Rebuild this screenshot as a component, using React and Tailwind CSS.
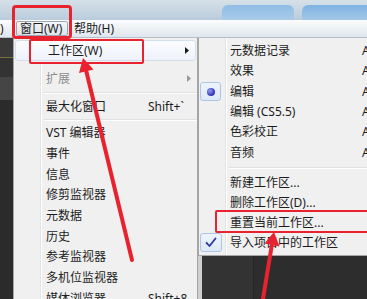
import React from "react";

const Tri = ({ color = "#1a1a1a" }) => (
  <svg width="4" height="7" viewBox="0 0 4 7" className="block">
    <path d="M0 0 L4 3.5 L0 7 Z" fill={color} />
  </svg>
);

function M1Row({ label, shortcut, arrow, disabled, highlight, h = "h-[21px]" }) {
  return (
    <div className={`relative flex items-center ${h} pl-[32px] pr-[5px] ${highlight ? "mx-[1px] rounded-[3px] border border-[#d5dfec] bg-gradient-to-b from-[#fbfcfe] to-[#eef3fa] pl-[31px] pr-[4px]" : ""}`}>
      <span className={`w-[102px] shrink-0 whitespace-nowrap ${disabled ? "text-[#8e8e8e]" : "text-[#1c1c1c]"}`}>{label}</span>
      {shortcut && <span className="text-[#1c1c1c] whitespace-nowrap">{shortcut}</span>}
      {arrow && (
        <span className="ml-auto mr-[1px]">
          <Tri color={disabled ? "#9a9a9a" : "#1a1a1a"} />
        </span>
      )}
    </div>
  );
}

function Sep({ h }) {
  return (
    <div className={`${h} flex items-center pl-[30px]`}>
      <div className="w-full">
        <div className="h-px bg-[#e0e0e0]" />
        <div className="h-px bg-white" />
      </div>
    </div>
  );
}

function M2Row({ label, shortcut, h, mark }) {
  return (
    <div className={`relative flex items-center ${h}`}>
      <div className="w-[31px] shrink-0 h-full flex items-center pl-[1px]">
        {mark === "dot" && (
          <div className="w-[21px] h-[19px] rounded-[3px] border border-[#aec6e4] bg-gradient-to-b from-[#eef4fc] to-[#dde9f7] flex items-center justify-center">
            <div className="w-[8px] h-[8px] rounded-full bg-[radial-gradient(circle_at_35%_35%,#9a9cf0,#3a3cc0_60%,#25278f)]" />
          </div>
        )}
        {mark === "check" && (
          <div className="w-[22px] h-[19px] rounded-[3px] border border-[#aec6e4] bg-gradient-to-b from-[#eef4fc] to-[#dde9f7] flex items-center justify-center">
            <svg width="12" height="11" viewBox="0 0 12 11">
              <path d="M1.5 5.8 L4.5 9 L10.5 1.5" fill="none" stroke="#2b36a8" strokeWidth="1.8" strokeLinecap="round" strokeLinejoin="round" />
            </svg>
          </div>
        )}
      </div>
      <span className="w-[132px] shrink-0 whitespace-nowrap text-[#1c1c1c]">{label}</span>
      {shortcut && <span className="shrink-0 whitespace-nowrap text-[#1c1c1c]">{shortcut}</span>}
    </div>
  );
}

export default function App() {
  const RED = "#e8232f";
  return (
    <div className="relative w-[367px] h-[299px] overflow-hidden bg-[#2c2c2c] text-[12px] leading-none font-['Noto_Sans','Noto_Sans_CJK_SC',sans-serif]">
      {/* title bar */}
      <div className="h-[20px] flex items-end bg-gradient-to-b from-[#d6e0e8] via-[#c8d6e2] to-[#b9ccdc]">
        <div className="w-[222px]" />
        <div className="w-[72px] h-[15px] rounded-t-[6px] bg-gradient-to-b from-[#8ebde6] to-[#a9cbe8]" />
        <div className="w-[8px]" />
        <div className="flex-1 h-[15px] rounded-tl-[6px] bg-gradient-to-b from-[#7fb3e3] to-[#a3c7e8]" />
      </div>
      {/* menu bar */}
      <div className="h-[18px] flex items-center bg-gradient-to-b from-[#fbfcfd] to-[#dfe6ee] border-b border-[#b7c0ca] text-[#1c1c1c]">
        <span className="w-[16px]">)</span>
        <span className="h-[15px] w-[52px] flex items-center pl-[3px] rounded-[2px] border border-[#9da6b1] bg-gradient-to-b from-[#f4f6f8] to-[#dde3ea]">窗口(W)</span>
        <span className="ml-[6px]">帮助(H)</span>
      </div>
      {/* body */}
      <div className="flex h-[261px]">
        {/* left dark strip */}
        <div className="w-[13px] shrink-0 flex flex-col">
          <div className="h-[19px] bg-[#3a3a3a]" />
          <div className="h-px bg-[#7d6f3a]" />
          <div className="h-[19px] bg-[#333]" />
          <div className="h-[23px] bg-[#454545]" />
          <div className="flex-1 bg-[#2b2b2b]" />
        </div>
        {/* main menu */}
        <div className="relative w-[185px] shrink-0 bg-[#f0f0f0] border-l border-r border-[#a5a5a5] pt-[2px]">
          <div className="absolute left-[26px] top-0 bottom-0 w-px bg-[#e2e3e3]" />
          <div className="absolute left-[27px] top-0 bottom-0 w-px bg-white" />
          <M1Row label="工作区(W)" arrow highlight />
          <div className="h-[7px]" />
          <M1Row label="扩展" arrow disabled />
          <Sep h="h-[7px]" />
          <M1Row label="最大化窗口" shortcut="Shift+`" />
          <Sep h="h-[6px]" />
          <M1Row label="VST 编辑器" h="h-[20.7px]" />
          <M1Row label="事件" h="h-[20.7px]" />
          <M1Row label="信息" h="h-[20.7px]" />
          <M1Row label="修剪监视器" h="h-[20.7px]" />
          <M1Row label="元数据" h="h-[20.7px]" />
          <M1Row label="历史" h="h-[20.7px]" />
          <M1Row label="参考监视器" h="h-[20.7px]" />
          <M1Row label="多机位监视器" h="h-[20.7px]" />
          <M1Row label="媒体浏览器" shortcut="Shift+8" h="h-[20.7px]" />
        </div>
        {/* submenu column */}
        <div className="flex-1 flex flex-col min-w-0">
          <div className="relative h-[218px] bg-[#f0f0f0] border-l border-b border-[#a5a5a5] pt-[3px] overflow-hidden">
            <div className="absolute left-[26px] top-0 bottom-0 w-px bg-[#e2e3e3]" />
            <div className="absolute left-[27px] top-0 bottom-0 w-px bg-white" />
            <M2Row label="元数据记录" shortcut="Alt+Shift+1" h="h-[20.3px]" />
            <M2Row label="效果" shortcut="Alt+Shift+2" h="h-[20.3px]" />
            <M2Row label="编辑" shortcut="Alt+Shift+3" h="h-[20.3px]" mark="dot" />
            <M2Row label="编辑 (CS5.5)" shortcut="Alt+Shift+4" h="h-[20.3px]" />
            <M2Row label="色彩校正" shortcut="Alt+Shift+5" h="h-[20.3px]" />
            <M2Row label="音频" shortcut="Alt+Shift+6" h="h-[20.3px]" />
            <Sep h="h-[10px]" />
            <M2Row label="新建工作区..." h="h-[20px]" />
            <M2Row label="删除工作区(D)..." h="h-[20px]" />
            <M2Row label="重置当前工作区..." h="h-[20px]" />
            <M2Row label="导入项目中的工作区" h="h-[20px]" mark="check" />
          </div>
          <div className="flex-1 flex">
            <div className="w-[4px] bg-[#cfcfcf]" />
            <div className="w-[52px] bg-[#333333] border-r border-[#262626]" />
            <div className="flex-1 bg-[#2d2d2d]" />
          </div>
        </div>
      </div>

      {/* annotations */}
      <div className="absolute left-[12px] top-[5px] w-[60px] h-[34px] rounded-[4px] border-[3px] border-[#e8232f]" />
      <div className="absolute left-[29px] top-[39px] w-[115px] h-[25px] rounded-[2px] border-2 border-[#e8232f]" />
      <div className="absolute left-[215px] top-[210px] w-[170px] h-[23px] rounded-[2px] border-2 border-[#e8232f]" />
      <svg className="absolute left-0 top-0 pointer-events-none" width="367" height="299" viewBox="0 0 367 299">
        <line x1="132" y1="260" x2="86" y2="70" stroke={RED} strokeWidth="4" strokeLinecap="round" />
        <polygon points="83,58 93.5,69.5 79,73" fill={RED} />
        <line x1="262" y1="305" x2="272" y2="244" stroke={RED} strokeWidth="4" strokeLinecap="round" />
        <polygon points="274,232 279.5,246.5 264.5,243.5" fill={RED} />
      </svg>
    </div>
  );
}
